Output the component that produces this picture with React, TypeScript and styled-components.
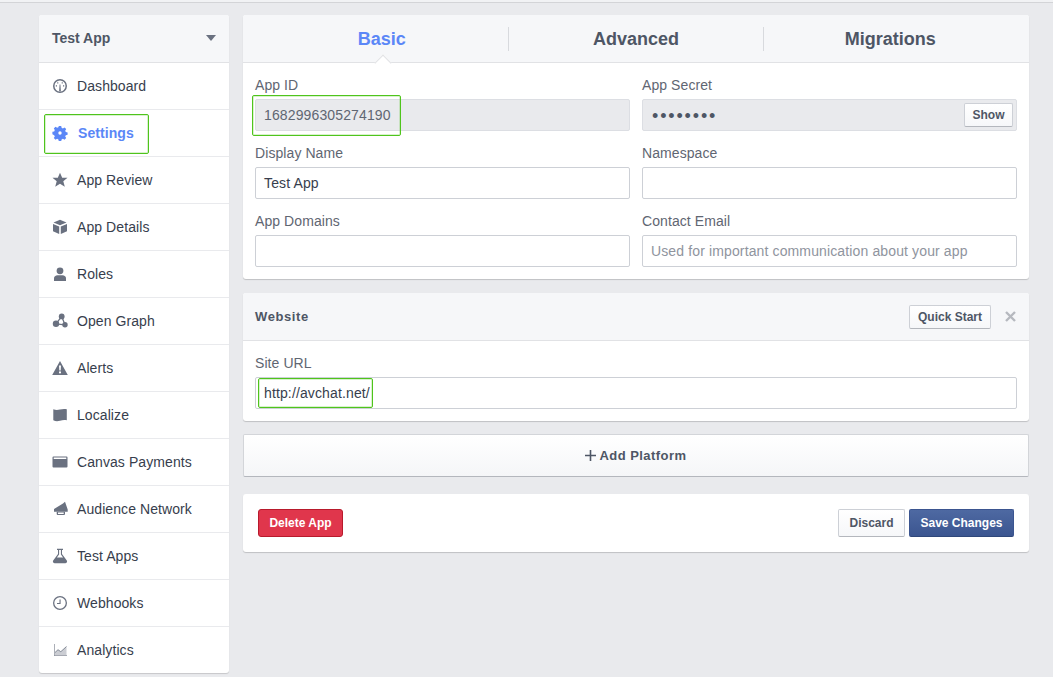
import React from "react";
import styled, { createGlobalStyle } from "styled-components";

const Global = createGlobalStyle`
  html, body { margin: 0; padding: 0; background: #e9eaed; overflow: hidden; }
  body { font-family: "Liberation Sans", Arial, sans-serif; }
  * { box-sizing: border-box; }
`;

const Page = styled.div`
  width: 1053px; height: 674px; overflow: hidden;
  position: relative;
  border-top: 1px solid #d3d4d7;
  margin-top: 2px;
  padding: 12px 24px 0 39px;
  display: flex; align-items: flex-start; gap: 14px;
`;

const TopStrip = styled.div`
  position: fixed; left: 0; right: 0; top: 0; height: 2px; background: #f1f2f4;
`;

const Sidebar = styled.nav`
  width: 190px; flex: none;
  background: #fff; border-radius: 3px;
  box-shadow: 0 1px 1px rgba(0,0,0,.15);
`;

const AppSwitch = styled.div`
  height: 48px; padding: 0 13px 2px;
  display: flex; align-items: center; justify-content: space-between;
  background: #f6f7f9; border-bottom: 1px solid #e1e2e5;
  border-radius: 3px 3px 0 0;
  font-size: 14px; font-weight: 700; color: #4e5665;
`;

const Caret = styled.span`
  width: 0; height: 0; margin-right: 0;
  border-left: 5px solid transparent; border-right: 5px solid transparent;
  border-top: 6px solid #6a7180;
`;

const NavRow = styled.div<{ $active?: boolean }>`
  height: 47px; padding: 0 13px;
  display: flex; align-items: center;
  gap: ${({ $active }) => ($active ? 10 : 9)}px;
  border-bottom: 1px solid #e9eaed;
  font-size: 14px; letter-spacing: .08px;
  font-weight: ${({ $active }) => ($active ? 700 : 400)};
  color: ${({ $active }) => ($active ? "#5b87f7" : "#373e4d")};
  &:last-child { border-bottom: none; height: 46px; }
  svg { flex: none; width: 16px; height: 16px; color: ${({ $active }) => ($active ? "#5b87f7" : "#6a7180")}; }
`;

const Main = styled.main`
  width: 786px; flex: none;
  display: flex; flex-direction: column;
`;

const Card = styled.section<{ $gap?: number }>`
  background: #fff; border-radius: 3px;
  box-shadow: 0 1px 1px rgba(0,0,0,.18);
  margin-bottom: ${({ $gap }) => $gap ?? 0}px;
`;

const Tabs = styled.div`
  height: 48px; padding: 1px 12px 0; display: flex; align-items: center;
  background: #f6f7f9; border-bottom: 1px solid #e1e2e5;
  border-radius: 3px 3px 0 0;
`;

const Tab = styled.div<{ $active?: boolean; $divider?: boolean }>`
  height: 24px; flex: 1;
  position: relative;
  display: flex; align-items: center; justify-content: center;
  font-size: 18px; font-weight: 700;
  color: ${({ $active }) => ($active ? "#5b87f7" : "#4e5665")};
  border-left: ${({ $divider }) => ($divider ? "1px solid #d8dade" : "none")};
  ${({ $active }) => $active && `
    &::after {
      content: ""; position: absolute; left: 50%; bottom: -18px;
      width: 11px; height: 11px; margin-left: -5px;
      background: #fff; border-left: 1px solid #e1e2e5; border-top: 1px solid #e1e2e5;
      transform: rotate(45deg);
    }
  `}
`;

const FormGrid = styled.div`
  display: grid; grid-template-columns: 375px 375px; column-gap: 12px; row-gap: 14px;
  padding: 14px 12px 12px;
`;

const Field = styled.div`
  display: flex; flex-direction: column;
  min-width: 0;
`;

const Label = styled.label`
  height: 22px;
  font-size: 14px; line-height: 16px; letter-spacing: .08px; color: #5f6672;
`;

const Input = styled.div<{ $disabled?: boolean; $placeholder?: boolean }>`
  height: 32px; padding: 0 8px;
  display: flex; align-items: center; justify-content: space-between;
  border: 1px solid #cdd0d6; border-radius: 2px;
  font-size: 14px; letter-spacing: .13px;
  background: ${({ $disabled }) => ($disabled ? "#e9eaed" : "#fff")};
  color: ${({ $disabled, $placeholder }) => ($placeholder ? "#8f949e" : $disabled ? "#5f6672" : "#373e4d")};
  border-color: ${({ $disabled }) => ($disabled ? "#dcdee3" : "#cdd0d6")};
`;

const Dots = styled.span`
  font-size: 18px; letter-spacing: 1.850px; color: #4e5665; line-height: 1;
  padding: 2px 0 0 1px;
`;

const SmallButton = styled.button`
  height: 24px; width: 49px; padding: 0; margin-right: -5px;
  font: 700 12px "Liberation Sans", Arial, sans-serif;
  color: #4e5665;
  background: linear-gradient(#fff, #f6f7f9);
  border: 1px solid #cdd0d6; border-bottom-color: #b4b7bd; border-radius: 2px;
`;

const PanelHead = styled.div`
  height: 48px; padding: 0 12px;
  display: flex; align-items: center; justify-content: space-between;
  background: #f6f7f9; border-bottom: 1px solid #e1e2e5;
  border-radius: 3px 3px 0 0;
`;

const PanelTitle = styled.div`
  font-size: 13px; font-weight: 700; color: #4e5665; letter-spacing: .6px;
`;

const PanelTools = styled.div`
  display: flex; align-items: center; gap: 14px;
`;

const QuickStart = styled(SmallButton)`
  margin: 0; width: 82px;
`;

const CloseIcon = styled.svg`
  width: 11px; height: 11px; margin-right: 1px; color: #b6b9bf;
`;

const PanelBody = styled.div`
  padding: 14px 12px 12px;
`;

const AddPlatform = styled.button`
  height: 43px; width: 100%; margin-bottom: 17px;
  display: flex; align-items: center; justify-content: center; gap: 3px;
  font: 700 13px "Liberation Sans", Arial, sans-serif; letter-spacing: .45px;
  color: #4e5665;
  background: linear-gradient(#fff, #f5f6f8);
  border: 1px solid #d3d5d9; border-bottom-color: #b4b7bd; border-radius: 2px;
  svg { width: 11px; height: 11px; }
`;

const Footer = styled(Card)`
  height: 58px; padding: 15px 15px 0;
  display: flex; align-items: flex-start; justify-content: space-between;
`;

const Actions = styled.div`
  display: flex; gap: 4px;
`;

const ActionButton = styled.button<{ $kind: "danger" | "plain" | "primary"; $w: number }>`
  height: 28px; width: ${({ $w }) => $w}px; padding: 0;
  font: 700 12px "Liberation Sans", Arial, sans-serif;
  border-radius: 2px; border: 1px solid;
  ${({ $kind }) =>
    $kind === "danger"
      ? "color:#fff;background:#e0364c;border-color:#b81a2c;border-radius:3px;"
      : $kind === "primary"
        ? "color:#fff;background:linear-gradient(#4e69a2,#3b5590);border-color:#3b5590 #3b5590 #2f477a;"
        : "color:#4e5665;background:linear-gradient(#fff,#f6f7f9);border-color:#cdd0d6 #cdd0d6 #b4b7bd;"}
`;

const Highlight = styled.div<{ $x: number; $y: number; $w: number; $h: number }>`
  position: absolute; pointer-events: none;
  left: ${({ $x }) => $x}px; top: ${({ $y }) => $y - 3}px;
  width: ${({ $w }) => $w}px; height: ${({ $h }) => $h}px;
  border: 1px solid #4fc41c;
  border-radius: 2px;
  box-shadow: inset 0 0 0 1px rgba(79,196,28,.22);
`;

const icons: Record<string, React.ReactNode> = {
  dashboard: (
    <>
      <path fillRule="evenodd" d="M8 1a7 7 0 1 1 0 14A7 7 0 0 1 8 1zm0 1.500a5.500 5.500 0 1 0 0 11 5.500 5.500 0 0 0 0-11z" />
      <path d="M7.100 13.300l.5-6.800h.8l.5 6.800zM3.800 7.200h1.200v1.200H3.800zM11 7.200h1.200v1.200H11zM5.200 4.300h1.100v1.100H5.200zM9.700 4.300h1.100v1.100H9.700z" />
    </>
  ),
  settings: (
    <path fillRule="evenodd" d="M6.800 1h2.400l.4 1.800 1.300.6 1.600-1 1.700 1.700-1 1.600.6 1.300 1.800.4v2.400l-1.800.4-.6 1.300 1 1.600-1.700 1.700-1.600-1-1.300.6-.4 1.800H6.800l-.4-1.800-1.300-.6-1.600 1-1.700-1.700 1-1.600-.6-1.300L.400 9.200V6.800l1.800-.4.600-1.300-1-1.600 1.700-1.700 1.600 1 1.300-.6zM8 6.300a1.700 1.700 0 1 0 0 3.400 1.700 1.700 0 0 0 0-3.400z" />
  ),
  star: <path d="M8 .8l2.200 5h5.300l-4.200 3.500 1.500 5.400L8 11.700l-4.800 3 1.500-5.400L.500 5.800h5.300z" />,
  box: (
    <>
      <path d="M8 .8l6.500 2.700L8 6.200 1.500 3.500z" />
      <path d="M1 5l6.200 2.600V15L1 12.200zM15 5L8.800 7.600V15l6.200-2.800z" />
    </>
  ),
  user: (
    <>
      <circle cx="8" cy="4.800" r="3.400" />
      <path d="M2 15v-2.800C2 10.300 3.500 9.500 5.500 9.200h5c2 .3 3.500 1.100 3.500 3V15z" />
    </>
  ),
  graph: (
    <>
      <circle cx="9.700" cy="3.400" r="2.900" />
      <circle cx="4" cy="10.800" r="3.200" />
      <circle cx="13" cy="11.800" r="2.700" />
      <path d="M9.700 3.400L4 10.800M9.700 3.400l3.300 8.400M4 10.800l9 1" fill="none" stroke="currentColor" strokeWidth="1.300" />
    </>
  ),
  alert: (
    <path fillRule="evenodd" d="M8 1l7.800 14H.2zM7 5.500l.3 5h1.400l.3-5zM8 11.300a1.100 1.100 0 1 0 0 2.200 1.100 1.100 0 0 0 0-2.200z" />
  ),
  map: <path d="M1.300 2.300C3.500 3.300 5.500 3.300 8 2.600s4.500-.8 6.800-.3v11c-2.300-.5-4.300-.3-6.800.4s-4.500.6-6.700-.4z" />,
  card: <path fillRule="evenodd" d="M1.500 2.500h13a1 1 0 0 1 1 1v9a1 1 0 0 1-1 1h-13a1 1 0 0 1-1-1v-9a1 1 0 0 1 1-1zM1.700 3.600v1.500h12.600V3.600z" />,
  megaphone: (
    <>
      <path d="M2 8l9-5.500L13 .8l2.700 7.700v2.200H2z" />
      <path fillRule="evenodd" d="M4.700 10.700H13V13a1 1 0 0 1-1 1H5.700a1 1 0 0 1-1-1zM6 11.500v1.500h5.700v-1.500z" />
    </>
  ),
  flask: (
    <path fillRule="evenodd" d="M5 .8h6V2h-1v4l4.800 6.600c.7 1.100.2 2.600-1.300 2.600h-11c-1.500 0-2-1.500-1.300-2.600L6 6V2H5zM7.100 2v4.400L4.900 9.500h6.200L8.900 6.400V2z" />
  ),
  clock: (
    <path fillRule="evenodd" d="M8 1a7 7 0 1 1 0 14A7 7 0 0 1 8 1zm0 1.300a5.700 5.700 0 1 0 0 11.400A5.700 5.700 0 0 0 8 2.300zM7.500 4.500h1.100V9H5V7.900h2.500z" />
  ),
  chart: (
    <>
      <path d="M2 2h.7v11.300H15v.7H2z" opacity=".8" />
      <path d="M3 13V10.500l3-2.800 2.800 2 5.700-5.200V13z" opacity=".35" />
      <path d="M3 10.500l3-2.800 2.800 2 5.700-5.200" fill="none" stroke="currentColor" strokeWidth=".8" />
    </>
  ),
};

const navItems = [
  { label: "Dashboard", icon: "dashboard" },
  { label: "Settings", icon: "settings", active: true },
  { label: "App Review", icon: "star" },
  { label: "App Details", icon: "box" },
  { label: "Roles", icon: "user" },
  { label: "Open Graph", icon: "graph" },
  { label: "Alerts", icon: "alert" },
  { label: "Localize", icon: "map" },
  { label: "Canvas Payments", icon: "card" },
  { label: "Audience Network", icon: "megaphone" },
  { label: "Test Apps", icon: "flask" },
  { label: "Webhooks", icon: "clock" },
  { label: "Analytics", icon: "chart" },
];

export default function App() {
  return (
    <Page>
      <Global />
      <TopStrip />
      <Sidebar>
        <AppSwitch>
          Test App
          <Caret />
        </AppSwitch>
        {navItems.map(({ label, icon, active }) => (
          <NavRow key={label} $active={active}>
            <svg viewBox="0 0 16 16" fill="currentColor">{icons[icon]}</svg>
            {label}
          </NavRow>
        ))}
      </Sidebar>

      <Main>
        <Card $gap={14}>
          <Tabs>
            <Tab $active>Basic</Tab>
            <Tab $divider>Advanced</Tab>
            <Tab $divider>Migrations</Tab>
          </Tabs>
          <FormGrid>
            <Field>
              <Label>App ID</Label>
              <Input $disabled>1682996305274190</Input>
            </Field>
            <Field>
              <Label>App Secret</Label>
              <Input $disabled>
                <Dots>••••••••</Dots>
                <SmallButton>Show</SmallButton>
              </Input>
            </Field>
            <Field>
              <Label>Display Name</Label>
              <Input>Test App</Input>
            </Field>
            <Field>
              <Label>Namespace</Label>
              <Input />
            </Field>
            <Field>
              <Label>App Domains</Label>
              <Input />
            </Field>
            <Field>
              <Label>Contact Email</Label>
              <Input $placeholder>Used for important communication about your app</Input>
            </Field>
          </FormGrid>
        </Card>

        <Card $gap={13}>
          <PanelHead>
            <PanelTitle>Website</PanelTitle>
            <PanelTools>
              <QuickStart>Quick Start</QuickStart>
              <CloseIcon viewBox="0 0 11 11" fill="none" stroke="currentColor" strokeWidth="2.400">
                <path d="M1 1l9 9M10 1l-9 9" />
              </CloseIcon>
            </PanelTools>
          </PanelHead>
          <PanelBody>
            <Field>
              <Label>Site URL</Label>
              <Input>http://avchat.net/</Input>
            </Field>
          </PanelBody>
        </Card>

        <AddPlatform>
          <svg viewBox="0 0 11 11" fill="none" stroke="currentColor" strokeWidth="1.600">
            <path d="M5.500 0v11M0 5.500h11" />
          </svg>
          Add Platform
        </AddPlatform>

        <Footer>
          <ActionButton $kind="danger" $w={85}>Delete App</ActionButton>
          <Actions>
            <ActionButton $kind="plain" $w={67}>Discard</ActionButton>
            <ActionButton $kind="primary" $w={105}>Save Changes</ActionButton>
          </Actions>
        </Footer>
      </Main>

      <Highlight $x={44} $y={114} $w={105} $h={40} />
      <Highlight $x={252} $y={95} $w={149} $h={41} />
      <Highlight $x={258} $y={378} $w={115} $h={30} />
    </Page>
  );
}
